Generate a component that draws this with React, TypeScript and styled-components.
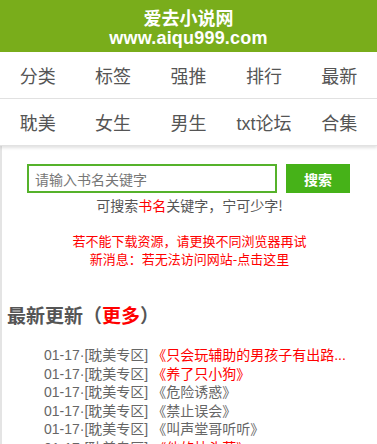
import styled, { createGlobalStyle } from "styled-components";

const GlobalStyle = createGlobalStyle`
    html, body {
        margin: 0;
        padding: 0;
        background: #fff;
        font-family: "Liberation Sans", "Noto Sans CJK SC", sans-serif;
        color: #555;
    }
`

const Page = styled.div`
    width: 377px;
    height: 444px;
    overflow: hidden;
`

const Header = styled.header`
    height: 52px;
    background: #79ad1b;
    color: #fff;
    text-align: center;
    font-weight: bold;
    padding-top: 6px;
    box-sizing: border-box;

    .title {
        font-size: 18px;
        line-height: 22px;
        font-family: "Noto Sans CJK SC", sans-serif;
    }
    .url {
        font-size: 18px;
        line-height: 20px;
        letter-spacing: 0.2px;
    }
`

const Body = styled.main`
    border-left: 2px solid #e4e4e4;
    min-height: 392px;
`

const NavRow = styled.nav<{ $last?: boolean }>`
    display: grid;
    grid-template-columns: repeat(5, 1fr);
    height: 46px;
    border-bottom: 1px solid #e2e2e2;
    box-shadow: ${(p) => (p.$last ? "0 2px 3px rgba(0,0,0,0.12)" : "none")};
    margin-left: -2px;
    background: #fff;

    a {
        display: flex;
        align-items: center;
        justify-content: center;
        font-size: 18px;
        color: #555;
        text-decoration: none;
        font-family: "Liberation Sans", "Noto Sans CJK SC", sans-serif;
    }
`

const SearchBar = styled.form`
    display: flex;
    gap: 9px;
    padding: 18px 0 0 25px;
`

const SearchInput = styled.input`
    width: 250px;
    height: 29px;
    box-sizing: border-box;
    border: 2px solid #55b22b;
    padding: 0 6px;
    font-size: 14px;
    font-family: "Noto Sans CJK SC", sans-serif;
    outline: none;

    &::placeholder {
        color: #777;
    }
`

const SearchButton = styled.button`
    width: 64px;
    height: 29px;
    border: none;
    background: #46b218;
    color: #fff;
    font-weight: bold;
    font-size: 14px;
    font-family: "Noto Sans CJK SC", sans-serif;
`

const Hint = styled.p`
    margin: 3px 0 0;
    text-align: center;
    font-size: 14px;
    line-height: 18px;
    color: #555;
    font-family: "Noto Sans CJK SC", sans-serif;

    em {
        font-style: normal;
        color: #f00;
    }
`

const Notice = styled.div`
    margin-top: 18px;
    text-align: center;
    font-size: 13px;
    line-height: 18px;
    color: #f00;
    font-family: "Noto Sans CJK SC", sans-serif;

    a {
        color: #f00;
        text-decoration: none;
    }
`

const SectionTitle = styled.h2`
    margin: 35px 0 0 5px;
    font-size: 19px;
    line-height: 24px;
    font-weight: bold;
    color: #555;
    font-family: "Noto Sans CJK SC", sans-serif;

    a {
        color: #f00;
        text-decoration: none;
    }
`

const UpdateList = styled.ul`
    list-style: none;
    margin: 19px 0 0;
    padding: 0 0 0 42px;
`

const UpdateItem = styled.li<{ $hot?: boolean }>`
    font-size: 14px;
    line-height: 18.5px;
    white-space: nowrap;
    color: #666;
    font-family: "Liberation Sans", "Noto Sans CJK SC", sans-serif;

    a {
        color: ${(p) => (p.$hot ? "#f00" : "#666")};
        text-decoration: none;
    }
`

const navTop = ["分类", "标签", "强推", "排行", "最新"];
const navBottom = ["耽美", "女生", "男生", "txt论坛", "合集"];

const updates = [
    { title: "《只会玩辅助的男孩子有出路...", hot: true },
    { title: "《养了只小狗》", hot: true },
    { title: "《危险诱惑》", hot: false },
    { title: "《禁止误会》", hot: false },
    { title: "《叫声堂哥听听》", hot: false },
    { title: "《他的枕头草》", hot: true },
];

const App = () => {
    return (
        <>
            <GlobalStyle />
            <Page>
                <Header>
                    <div className="title">爱去小说网</div>
                    <div className="url">www.aiqu999.com</div>
                </Header>

                <Body>
                    <NavRow>
                        {navTop.map((n) => (
                            <a key={n} href="#">{n}</a>
                        ))}
                    </NavRow>
                    <NavRow $last>
                        {navBottom.map((n) => (
                            <a key={n} href="#">{n}</a>
                        ))}
                    </NavRow>

                    <SearchBar onSubmit={(e) => e.preventDefault()}>
                        <SearchInput placeholder="请输入书名关键字" />
                        <SearchButton type="submit">搜索</SearchButton>
                    </SearchBar>
                    <Hint>
                        可搜索<em>书名</em>关键字，宁可少字!
                    </Hint>

                    <Notice>
                        <div>若不能下载资源，请更换不同浏览器再试</div>
                        <div>
                            新消息：<a href="#">若无法访问网站-点击这里</a>
                        </div>
                    </Notice>

                    <SectionTitle>
                        最新更新（<a href="#">更多</a>）
                    </SectionTitle>

                    <UpdateList>
                        {updates.map((u) => (
                            <UpdateItem key={u.title} $hot={u.hot}>
                                01-17·[耽美专区] <a href="#">{u.title}</a>
                            </UpdateItem>
                        ))}
                    </UpdateList>
                </Body>
            </Page>
        </>
    );
}

export default App;
